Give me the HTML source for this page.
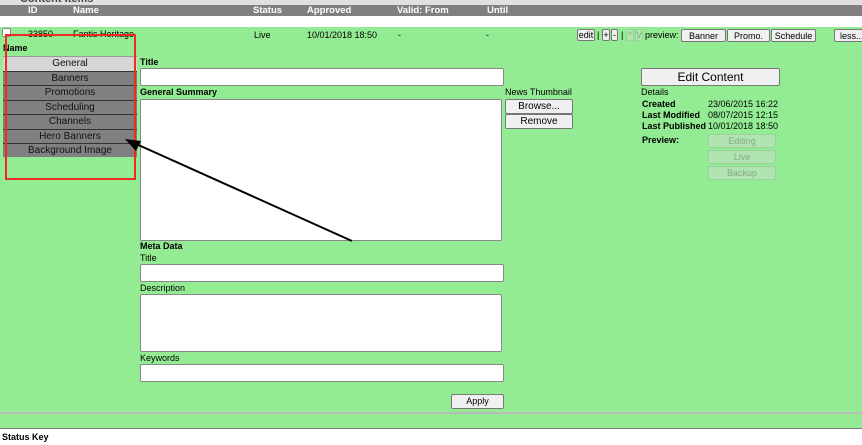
<!DOCTYPE html>
<html><head><style>
*{margin:0;padding:0;box-sizing:border-box}
body{width:862px;height:445px;position:relative;overflow:hidden;background:#fff;font-family:"Liberation Sans",Arial,sans-serif;font-size:9px;color:#000}
.a{position:absolute;white-space:nowrap}
.b{font-weight:bold}
.inp{position:absolute;background:#fff;border:1px solid #888;border-radius:2px}
.btn{position:absolute;background:#f0f0f0;border:1px solid #777;border-radius:2px;text-align:center;font-size:9px;line-height:12px}
.dis{position:absolute;background:#b0e4b0;border:1px solid #9cd09c;border-radius:2px;color:#8aa88a;text-align:center;font-size:9px;line-height:12px}
.tab{position:absolute;left:3px;width:134px;height:15px;background:#808080;border-top:1px solid #333;text-align:center;font-size:10px;line-height:14px;color:#111}
</style></head><body>
<div class="a" style="left:0;top:0;width:862px;height:5px;background:#e0e0e0"></div>
<div class="a b" style="left:20px;top:-7px;font-size:11px;color:#444">Content Items</div>
<div class="a" style="left:0;top:5px;width:862px;height:11px;background:#808080"></div>
<div class="a b" style="left:28px;top:5px;color:#fff;font-size:9.5px">ID</div>
<div class="a b" style="left:73px;top:5px;color:#fff;font-size:9.5px">Name</div>
<div class="a b" style="left:253px;top:5px;color:#fff;font-size:9.5px">Status</div>
<div class="a b" style="left:307px;top:5px;color:#fff;font-size:9.5px">Approved</div>
<div class="a b" style="left:397px;top:5px;color:#fff;font-size:9.5px">Valid: From</div>
<div class="a b" style="left:487px;top:5px;color:#fff;font-size:9.5px">Until</div>
<div class="a" style="left:0;top:27px;width:862px;height:385px;background:#93ec93"></div>
<div class="a" style="left:0;top:412px;width:862px;height:2px;background:#bbb"></div>
<div class="a" style="left:0;top:414px;width:862px;height:14px;background:#93ec93"></div>
<div class="a" style="left:0;top:428px;width:862px;height:1px;background:#777"></div>
<div class="a b" style="left:2px;top:432px;font-size:9px">Status Key</div>

<div class="inp" style="left:2px;top:28px;width:9px;height:9px"></div>
<div class="a" style="left:28px;top:29px">33850</div>
<div class="a" style="left:73px;top:29px">Fantis Heritage</div>
<div class="a" style="left:254px;top:30px">Live</div>
<div class="a" style="left:307px;top:30px">10/01/2018 18:50</div>
<div class="a" style="left:398px;top:30px">-</div>
<div class="a" style="left:486px;top:30px">-</div>
<div class="btn" style="left:577px;top:29px;width:18px;height:12px;line-height:10px">edit</div>
<div class="a" style="left:597px;top:30px">|</div>
<div class="btn" style="left:602px;top:29px;width:8px;height:12px;line-height:10px">+</div>
<div class="btn" style="left:611px;top:29px;width:7px;height:12px;line-height:10px">-</div>
<div class="a" style="left:621px;top:30px">|</div>
<div class="dis" style="left:626px;top:29px;width:8px;height:12px;line-height:10px">^</div>
<div class="dis" style="left:635px;top:29px;width:8px;height:12px;line-height:10px">V</div>
<div class="a" style="left:645px;top:30px">preview:</div>
<div class="btn" style="left:681px;top:29px;width:45px;height:13px">Banner</div>
<div class="btn" style="left:727px;top:29px;width:43px;height:13px">Promo.</div>
<div class="btn" style="left:771px;top:29px;width:45px;height:13px">Schedule</div>
<div class="btn" style="left:834px;top:29px;width:34px;height:13px;text-align:left;padding-left:5px">less...</div>

<div class="a b" style="left:3px;top:43px">Name</div>
<div class="tab" style="top:56px;background:#d6d6d6;border-top:1px solid #999">General</div>
<div class="tab" style="top:71px">Banners</div>
<div class="tab" style="top:85px">Promotions</div>
<div class="tab" style="top:100px">Scheduling</div>
<div class="tab" style="top:114px">Channels</div>
<div class="tab" style="top:129px">Hero Banners</div>
<div class="tab" style="top:143px;height:14px">Background Image</div>
<div class="a" style="left:5px;top:34px;width:131px;height:146px;border:2.5px solid #f02a20"></div>

<div class="a b" style="left:140px;top:57px">Title</div>
<div class="inp" style="left:140px;top:68px;width:364px;height:18px"></div>
<div class="a b" style="left:140px;top:87px">General Summary</div>
<div class="inp" style="left:140px;top:99px;width:362px;height:142px"></div>
<div class="a b" style="left:140px;top:241px">Meta Data</div>
<div class="a" style="left:140px;top:253px">Title</div>
<div class="inp" style="left:140px;top:264px;width:364px;height:18px"></div>
<div class="a" style="left:140px;top:283px">Description</div>
<div class="inp" style="left:140px;top:294px;width:362px;height:58px"></div>
<div class="a" style="left:140px;top:353px">Keywords</div>
<div class="inp" style="left:140px;top:364px;width:364px;height:18px"></div>
<div class="btn" style="left:451px;top:394px;width:53px;height:15px;line-height:13px">Apply</div>

<div class="a" style="left:505px;top:87px">News Thumbnail</div>
<div class="btn" style="left:505px;top:99px;width:68px;height:15px;font-size:10px;line-height:13px">Browse...</div>
<div class="btn" style="left:505px;top:114px;width:68px;height:15px;font-size:10px;line-height:13px">Remove</div>

<div class="btn" style="left:641px;top:68px;width:139px;height:18px;font-size:12px;line-height:16px">Edit Content</div>
<div class="a" style="left:641px;top:87px">Details</div>
<div class="a b" style="left:642px;top:99px">Created</div>
<div class="a" style="left:708px;top:99px">23/06/2015 16:22</div>
<div class="a b" style="left:642px;top:110px">Last Modified</div>
<div class="a" style="left:708px;top:110px">08/07/2015 12:15</div>
<div class="a b" style="left:642px;top:121px">Last Published</div>
<div class="a" style="left:708px;top:121px">10/01/2018 18:50</div>
<div class="a b" style="left:642px;top:135px">Preview:</div>
<div class="dis" style="left:708px;top:134px;width:68px;height:14px">Editing</div>
<div class="dis" style="left:708px;top:150px;width:68px;height:14px">Live</div>
<div class="dis" style="left:708px;top:166px;width:68px;height:14px">Backup</div>

<svg class="a" style="left:0;top:0" width="862" height="445">
<line x1="352" y1="241" x2="134" y2="143" stroke="#000" stroke-width="2"/>
<polygon points="125,139 141,141 136,151" fill="#000"/>
</svg>
</body></html>
